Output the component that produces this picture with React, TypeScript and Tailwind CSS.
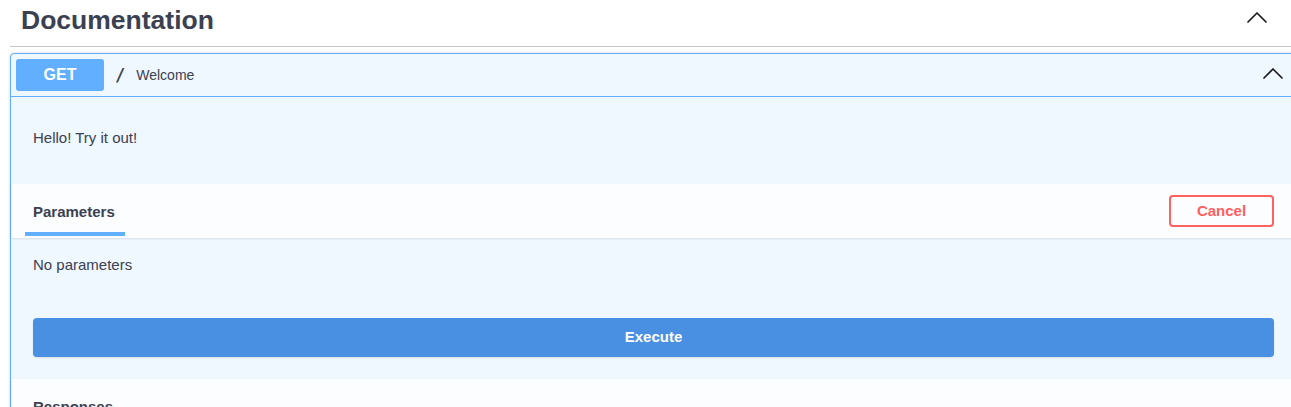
function Chevron({ className }: { className?: string }) {
  return (
    <svg viewBox="0 0 20 20" className={className} fill="none" stroke="currentColor" strokeWidth={1.7} strokeLinecap="round" strokeLinejoin="round">
      <polyline points="1,14 10,5 19,14" />
    </svg>
  );
}

export default function App() {
  return (
    <div className="h-[407px] w-full overflow-hidden bg-white font-['Liberation_Sans',Arial,sans-serif] text-[#3b4151]">
      <div className="ml-[10px] w-[1285px]">
        {/* tag header */}
        <div className="flex h-[47px] items-start justify-between border-b border-[#c4c6cb] pl-[11px] pr-[28px]">
          <h3 className="pt-[5px] text-[26.5px] font-bold leading-[30px]">Documentation</h3>
          <Chevron className="mt-[8px] h-5 w-5 text-[#1a1a1a]" />
        </div>

        {/* operation block */}
        <div className="mt-[6px] rounded-[4px] border border-[#61affe] bg-[#eff7ff] shadow-[0_0_3px_rgba(0,0,0,0.19)]">
          <div className="flex items-center border-b border-[#61affe] p-[5px]">
            <span className="flex h-[32px] w-[88px] items-center justify-center rounded-[3px] bg-[#61affe] text-[16px] font-bold text-white">
              GET
            </span>
            <span className="ml-[11px] font-['DejaVu_Sans_Mono',monospace] text-[17px] font-bold leading-none text-[#3b4151]">/</span>
            <span className="ml-[11px] text-[14px] text-[#3b4151]">Welcome</span>
            <Chevron className="mb-[2px] ml-auto mr-[6px] h-5 w-5 text-[#1a1a1a]" />
          </div>

          <div className="h-[87px] pl-[22px] pt-[31px] text-[15px] leading-[20px]">Hello! Try it out!</div>

          <div className="flex h-[54px] items-stretch justify-between bg-[#fcfdff] pl-[14px] pr-[20px] shadow-[0_1px_2px_rgba(0,0,0,0.1)]">
            <div className="flex w-[100px] flex-col justify-end">
              <h4 className="pl-[8px] text-[15px] font-bold leading-[20px]">Parameters</h4>
              <div className="mb-[2px] mt-[10px] h-[4px] bg-[#61affe]" />
            </div>
            <button className="mt-[11px] h-[32px] w-[105px] self-start rounded-[4px] border-2 border-[#ff6060] text-[15px] font-bold text-[#ff6060]">
              Cancel
            </button>
          </div>

          <div className="pb-[22px] pl-[22px] pr-[20px] pt-[17px]">
            <p className="text-[15px] leading-[20px]">No parameters</p>
            <button className="mt-[43px] h-[39px] w-full rounded-[4px] bg-[#4990e2] text-[15px] font-bold text-white shadow-[0_1px_2px_rgba(0,0,0,0.1)]">
              Execute
            </button>
          </div>

          <div className="h-[60px] bg-[#fcfdff] pl-[22px] pt-[18px] shadow-[0_1px_2px_rgba(0,0,0,0.1)]">
            <h4 className="text-[15px] font-bold leading-[20px]">Responses</h4>
          </div>
        </div>
      </div>
    </div>
  );
}
